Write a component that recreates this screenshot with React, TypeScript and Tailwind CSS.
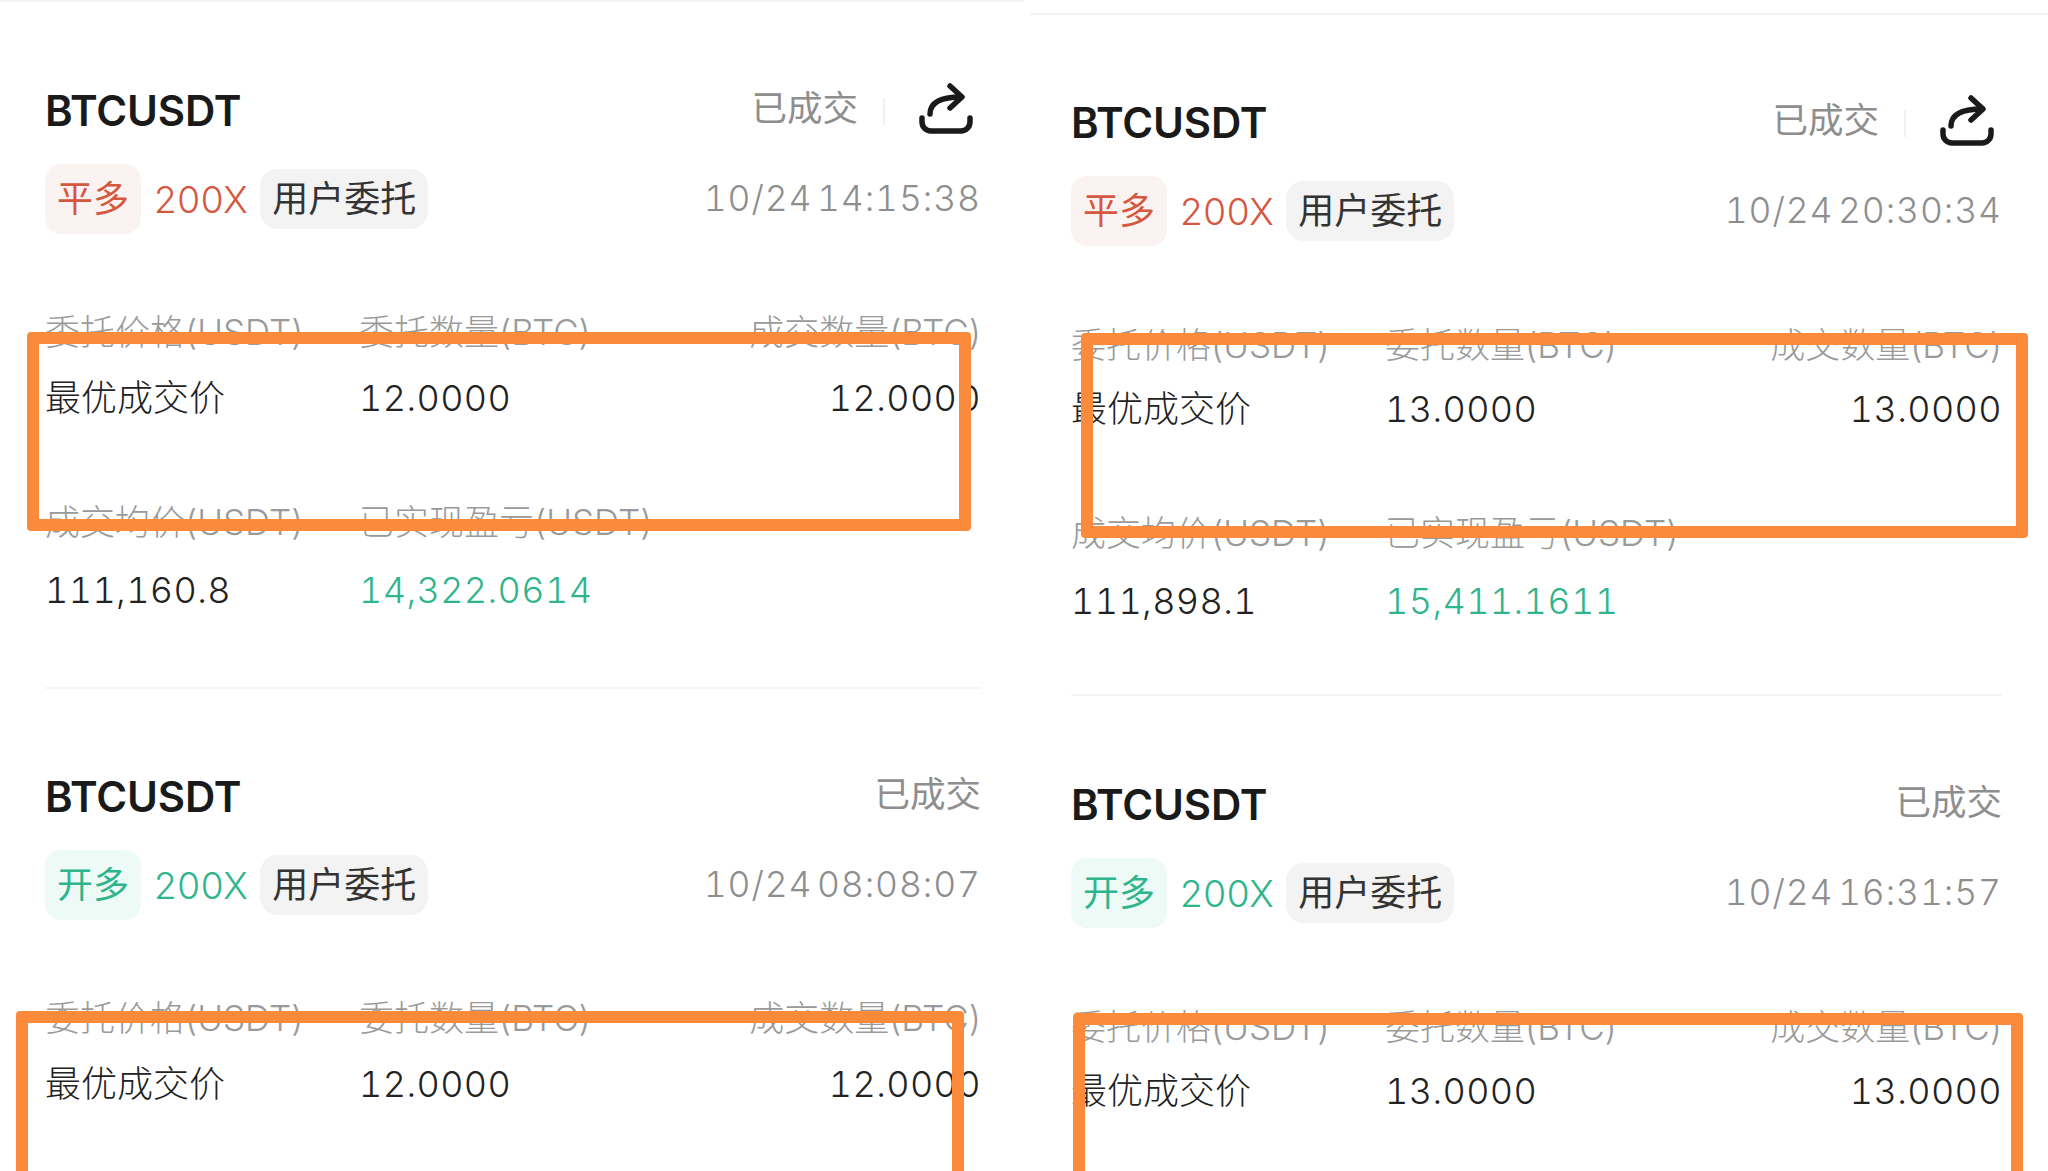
const FONT = 'font-["Inter","Noto_Sans_CJK_SC",sans-serif]';

function ShareIcon() {
  return (
    <svg width="54" height="52" viewBox="0 0 54 52" fill="none" stroke="#1a1a1a" strokeWidth="5.5" strokeLinecap="round" strokeLinejoin="round">
      <path d="M3 35v4a9 9 0 0 0 9 9h30a9 9 0 0 0 9-9v-4" />
      <path d="M11 31C11 20 20 14 42 14" />
      <path d="M31 3l12 11-12 11" />
    </svg>
  );
}

type CardProps = {
  open: boolean;
  time: string;
  qty: string;
  avg?: string;
  pnl?: string;
  share?: boolean;
  right?: boolean;
};

function Card({ open, time, qty, avg, pnl, share, right }: CardProps) {
  const tone = open ? "text-[#2fb58c]" : "text-[#d5573f]";
  const tagBg = open ? "bg-[#eefaf5]" : "bg-[#faf3f2]";
  const num = "tabular-nums tracking-[0.4px]";
  return (
    <div>
      <div className="flex h-[60px] items-center justify-between">
        <span className="text-[42px] font-semibold leading-none tracking-[-0.2px] text-[#1a1a1a]">BTCUSDT</span>
        <div className="flex items-center">
          <span className="text-[35.5px] leading-none text-[#8e8e8e] mb-1">已成交</span>
          {share && (
            <>
              <span className="ml-[25px] h-[27px] w-[2px] bg-[#f1f1f1]" />
              <span className="ml-[34px] mr-[8px] mb-[4px] flex">
                <ShareIcon />
              </span>
            </>
          )}
        </div>
      </div>

      <div className="mt-[23px] flex h-[70px] items-center justify-between">
        <div className="flex items-center">
          <span className={`flex h-[70px] w-[96px] items-center justify-center rounded-[16px] text-[36px] leading-none ${tagBg} ${tone}`}>
            {open ? "开多" : "平多"}
          </span>
          <span className={`ml-[13px] text-[37px] font-light leading-none tracking-[0.6px] ${tone}`}>200X</span>
          <span className="ml-[12px] flex h-[60px] w-[168px] items-center justify-center rounded-[18px] bg-[#f3f3f3] text-[36px] leading-none text-[#333333]">
            用户委托
          </span>
        </div>
        <span className="text-[35.5px] font-light leading-none tabular-nums tracking-[0.9px] [word-spacing:-6px] text-[#8e8e8e]">{time}</span>
      </div>

      <div className={`${right ? "mt-[77px]" : "mt-[76px]"} grid grid-cols-[314px_1fr_auto] text-[#9a9a9a] text-[35px] leading-[44px] font-light`}>
        <span>委托价格(USDT)</span>
        <span>委托数量(BTC)</span>
        <span>成交数量(BTC)</span>
      </div>
      <div className={`${right ? "mt-[18px]" : "mt-[20px]"} grid grid-cols-[314px_1fr_auto] text-[36px] leading-[48px] font-light text-[#222222]`}>
        <span>最优成交价</span>
        <span className={num}>{qty}</span>
        <span className={num}>{qty}</span>
      </div>

      {avg && (
        <>
          <div className="mt-[78px] grid grid-cols-[314px_1fr] text-[#9a9a9a] text-[35px] leading-[44px] font-light">
            <span>成交均价(USDT)</span>
            <span>已实现盈亏(USDT)</span>
          </div>
          <div className="mt-[22px] grid grid-cols-[314px_1fr] text-[36px] leading-[48px] font-light">
            <span className={`text-[#222222] ${num}`}>{avg}</span>
            <span className={`text-[#2fb58c] ${num}`}>{pnl}</span>
          </div>
          <div className={`${right ? "mt-[69px] mb-[79px]" : "mt-[73px] mb-[78px]"} h-[2px] bg-[#f5f5f5]`} />
        </>
      )}
    </div>
  );
}

function Frame({ className }: { className: string }) {
  return <div className={`pointer-events-none absolute rounded-[4px] border-[12px] border-[#fb8b3b] ${className}`} />;
}

export default function App() {
  return (
    <div className={`relative flex h-[1171px] w-[2048px] overflow-hidden bg-white ${FONT}`}>
      <div className="w-[1026px] pl-[45px] pr-[45px]">
        <div className="-ml-[45px] -mr-[43px] h-[2px] bg-[#f3f3f3]" />
        <div className="pt-[79px]">
          <Card open={false} share time="10/24 14:15:38" qty="12.0000" avg="111,160.8" pnl="14,322.0614" />
          <Card open time="10/24 08:08:07" qty="12.0000" />
        </div>
      </div>
      <div className="w-[1022px] pl-[45px] pr-[46px]">
        <div className="mt-[13px] -ml-[41px] -mr-[46px] h-[2px] bg-[#f3f3f3]" />
        <div className="pt-[78px]">
          <Card right open={false} share time="10/24 20:30:34" qty="13.0000" avg="111,898.1" pnl="15,411.1611" />
          <Card right open time="10/24 16:31:57" qty="13.0000" />
        </div>
      </div>

      <Frame className="left-[27px] top-[332px] h-[199px] w-[944px]" />
      <Frame className="left-[16px] top-[1011px] h-[260px] w-[948px]" />
      <Frame className="left-[1081px] top-[333px] h-[205px] w-[947px]" />
      <Frame className="left-[1073px] top-[1013px] h-[260px] w-[950px]" />
    </div>
  );
}
